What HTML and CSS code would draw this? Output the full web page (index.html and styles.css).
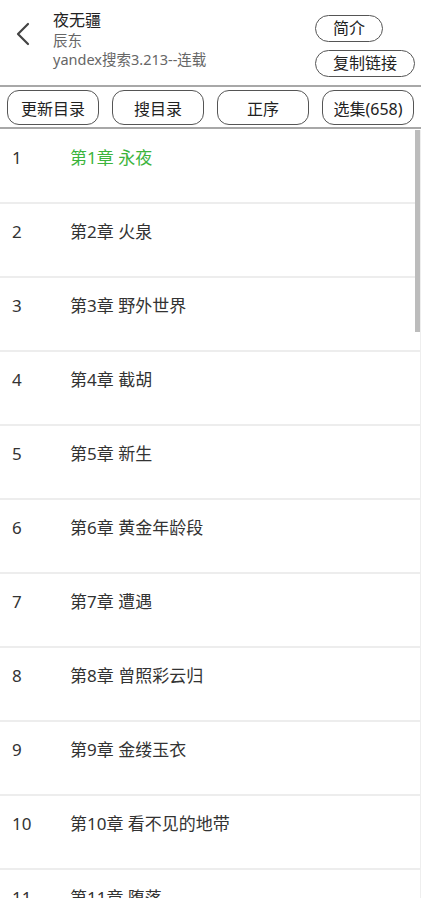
FILE: index.html
```html
<!DOCTYPE html>
<html lang="zh-CN">
<head>
  <meta charset="UTF-8">
  <meta name="viewport" content="width=device-width, initial-scale=1.0">
  <title>夜无疆 - 目录</title>
  <link rel="stylesheet" href="styles.css">
</head>
<body>
  <div class="page">
    <div class="header">
      <button class="back" aria-label="返回">
        <svg width="16" height="24" viewBox="0 0 16 24">
          <path d="M13 2 L3 12 L13 22" fill="none" stroke="#444" stroke-width="2.2" stroke-linecap="round" stroke-linejoin="round"/>
        </svg>
      </button>
      <div class="info">
        <div class="title">夜无疆</div>
        <div class="sub">辰东</div>
        <div class="sub">yandex搜索3.213--连载</div>
      </div>
      <div class="actions">
        <button class="pill">简介</button>
        <button class="pill">复制链接</button>
      </div>
    </div>

    <div class="toolbar">
      <button class="tool">更新目录</button>
      <button class="tool">搜目录</button>
      <button class="tool">正序</button>
      <button class="tool">选集(658)</button>
    </div>

    <div class="list-wrap">
      <ul class="chapters" id="chapters"></ul>
      <div class="scrollbar"></div>
    </div>
  </div>

  <script>
    const chapters = [
      '永夜', '火泉', '野外世界', '截胡', '新生', '黄金年龄段',
      '遭遇', '曾照彩云归', '金缕玉衣', '看不见的地带', '堕落'
    ];
    const current = 1;

    const list = document.getElementById('chapters');
    chapters.forEach(function (name, i) {
      const li = document.createElement('li');
      li.className = 'chapter' + (i + 1 === current ? ' active' : '');
      li.innerHTML = '<span class="num">' + (i + 1) + '</span>' +
        '<span class="name">第' + (i + 1) + '章 ' + name + '</span>';
      list.appendChild(li);
    });
  </script>
</body>
</html>
```

FILE: styles.css
```css
body {
  margin: 0;
  background: #fff;
  font-family: "Noto Sans", "Noto Sans CJK SC", sans-serif;
  color: #222;
}
button {
  font-family: inherit;
  background: #fff;
  cursor: pointer;
}
.page {
  width: 421px;
  height: 898px;
  overflow: hidden;
  display: flex;
  flex-direction: column;
}
.header {
  display: flex;
  height: 85px;
  border-bottom: 2px solid #a8a8a8;
}
.back {
  border: none;
  background: none;
  padding: 22px 0 0 15px;
  width: 53px;
  height: 50px;
  text-align: left;
}
.info {
  flex: 1;
  padding-top: 10px;
}
.title {
  font-size: 16px;
  line-height: 21px;
  color: #222;
}
.sub {
  font-size: 14.5px;
  line-height: 19px;
  color: #666;
}
.actions {
  display: flex;
  flex-direction: column;
  align-items: flex-start;
  gap: 8px;
  padding: 15px 6px 0 0;
  width: 100px;
}
.pill {
  height: 27px;
  padding: 0 17px;
  border: 1.5px solid #555;
  border-radius: 14px;
  font-size: 16px;
  color: #222;
  line-height: 23px;
  white-space: nowrap;
}
.toolbar {
  display: grid;
  grid-template-columns: repeat(4, 92px);
  gap: 13px;
  padding: 3px 0 2px 7px;
  border-bottom: 2px solid #a8a8a8;
}
.tool {
  height: 35px;
  border: 1.5px solid #555;
  border-radius: 12px;
  font-size: 16px;
  color: #222;
  padding: 0;
}
.list-wrap {
  position: relative;
  flex: 1;
  overflow: hidden;
  border-right: 1px solid #eee;
  margin-top: 1px;
}
.chapters {
  list-style: none;
  margin: 0;
  padding: 0;
}
.chapter {
  display: flex;
  height: 74px;
  box-sizing: border-box;
  padding-top: 16px;
  font-size: 17px;
  line-height: 24px;
  color: #333;
  border-bottom: 2px solid #ededed;
}
.chapter .num {
  width: 58px;
  padding-left: 12px;
}
.chapter.active {
  color: #3db43d;
}
.chapter.active .num {
  color: #333;
}
.scrollbar {
  position: absolute;
  top: 0;
  right: 0;
  width: 5px;
  height: 202px;
  background: #bcbcbc;
}
```
